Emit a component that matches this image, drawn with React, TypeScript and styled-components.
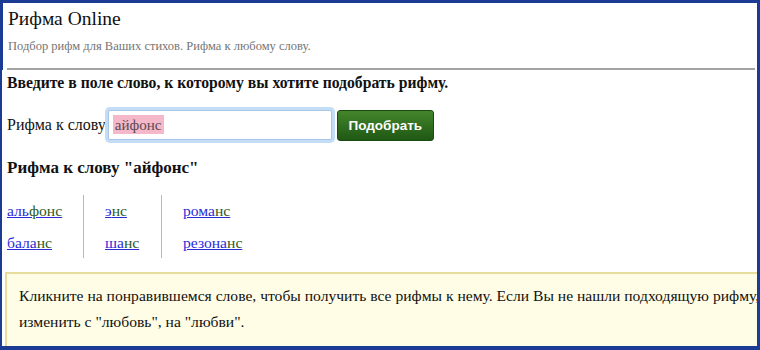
import styled, { createGlobalStyle } from "styled-components";

const GlobalStyle = createGlobalStyle`
  html, body {
    margin: 0;
    padding: 0;
    background: #ffffff;
  }
  body {
    font-family: "Liberation Serif", "Times New Roman", serif;
    color: #111111;
  }
`;

const Frame = styled.div`
  box-sizing: border-box;
  width: 760px;
  height: 350px;
  overflow: hidden;
  border-style: solid;
  border-color: #1c3b95;
  border-width: 3px 3px 4px 2px;
  background: #ffffff;
`;

const Header = styled.header`
  box-sizing: border-box;
  height: 67px;
  padding: 4px 0 0 5px;
  border-left: 1px solid #1c3b95;
  background: linear-gradient(#a3a3a3, #a3a3a3) no-repeat 4px 100% / calc(100% - 6px) 2px;
`;

const Title = styled.h1`
  margin: 0;
  font-size: 19.5px;
  line-height: 24px;
  font-weight: normal;
  color: #111111;
`;

const Subtitle = styled.p`
  margin: 7px 0 0;
  font-size: 12.5px;
  line-height: 16px;
  color: #757575;
`;

const Main = styled.main`
  padding-left: 5px;
`;

const Lead = styled.h2`
  margin: 4px 0 0;
  font-size: 15.7px;
  line-height: 18px;
  font-weight: bold;
`;

const SearchRow = styled.form`
  display: flex;
  align-items: center;
  margin-top: 17px;
  height: 32px;
`;

const Label = styled.label`
  font-size: 16px;
  line-height: 18px;
  margin-right: 2px;
`;

const Input = styled.input`
  box-sizing: border-box;
  width: 224px;
  height: 30px;
  padding: 0 0 0 6px;
  border: 1px solid #a9c6e6;
  border-radius: 2px;
  box-shadow: 0 0 0 3px #c3ddf6;
  outline: none;
  font-family: "Liberation Serif", "Times New Roman", serif;
  font-size: 15px;
  color: #5a4a50;
  background: #ffffff linear-gradient(#f4b8ca, #f4b8ca) no-repeat 4px 4px / 51px 19px;
`;

const Button = styled.button`
  box-sizing: border-box;
  margin-left: 5px;
  width: 97px;
  height: 31px;
  border: 1px solid #1b4a10;
  border-radius: 3px;
  background: linear-gradient(#43852b, #1f5814);
  color: #ffffff;
  font-family: "Liberation Sans", Arial, sans-serif;
  font-weight: bold;
  font-size: 13.5px;
  padding: 0;
`;

const ResultTitle = styled.h3`
  margin: 17px 0 0;
  font-size: 17px;
  line-height: 20px;
  font-weight: bold;
`;

const Columns = styled.div`
  display: flex;
  margin-top: 17px;
`;

const Column = styled.ul<{ $width: number; $first?: boolean }>`
  list-style: none;
  margin: 0;
  padding: 0 0 0 ${(p) => (p.$first ? 0 : 21)}px;
  width: ${(p) => p.$width}px;
  border-left: ${(p) => (p.$first ? "none" : "1px solid #b8b8b8")};
`;

const Item = styled.li`
  font-size: 15.6px;
  line-height: 31.5px;
`;

const Link = styled.a`
  color: #2b2bd8;
  text-decoration: underline;
`;

const Ending = styled.span`
  color: #2c5a1e;
`;

const Notice = styled.div`
  margin: 14px 0 0 -2px;
  width: 820px;
  padding: 9px 12px 11px;
  background: #fffde6;
  border: 2px solid #e6dc9c;
  font-size: 15.6px;
  line-height: 26px;
  white-space: nowrap;
`;

const columns = [
  { width: 76, words: [["аль", "фонс"], ["бала", "нс"]] },
  { width: 56, words: [["э", "нс"], ["ша", "нс"]] },
  { width: 120, words: [["рома", "нс"], ["резона", "нс"]] },
];

export default function App() {
  return (
    <>
      <GlobalStyle />
      <Frame>
        <Header>
          <Title>Рифма Online</Title>
          <Subtitle>Подбор рифм для Ваших стихов. Рифма к любому слову.</Subtitle>
        </Header>
        <Main>
          <Lead>Введите в поле слово, к которому вы хотите подобрать рифму.</Lead>
          <SearchRow onSubmit={(e) => e.preventDefault()}>
            <Label htmlFor="word">Рифма к слову</Label>
            <Input id="word" defaultValue="айфонс" />
            <Button type="submit">Подобрать</Button>
          </SearchRow>
          <ResultTitle>Рифма к слову "айфонс"</ResultTitle>
          <Columns>
            {columns.map((col, i) => (
              <Column key={i} $width={col.width} $first={i === 0}>
                {col.words.map(([stem, end]) => (
                  <Item key={stem + end}>
                    <Link href="#">
                      {stem}
                      <Ending>{end}</Ending>
                    </Link>
                  </Item>
                ))}
              </Column>
            ))}
          </Columns>
          <Notice>
            Кликните на понравившемся слове, чтобы получить все рифмы к нему. Если Вы не нашли подходящую рифму,
            <br />
            изменить с "любовь", на "любви".
          </Notice>
        </Main>
      </Frame>
    </>
  );
}
